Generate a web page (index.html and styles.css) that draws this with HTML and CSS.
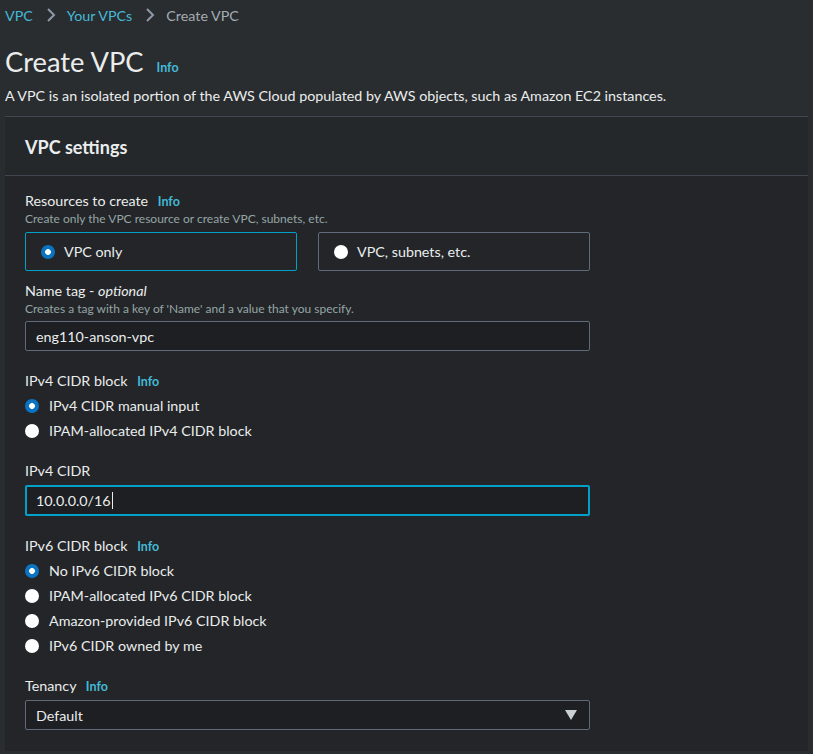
FILE: index.html
```html
<!DOCTYPE html>
<html lang="en">
<head>
<meta charset="utf-8">
<title>Create VPC</title>
<link rel="stylesheet" href="styles.css">
</head>
<body>
<nav class="crumbs">
  <a class="crumb-link" href="#">VPC</a>
  <svg class="chev" viewBox="0 0 10 16" width="10" height="16"><path d="M2 2l6 6-6 6" fill="none" stroke="#8d99a8" stroke-width="2"/></svg>
  <a class="crumb-link" href="#">Your VPCs</a>
  <svg class="chev" viewBox="0 0 10 16" width="10" height="16"><path d="M2 2l6 6-6 6" fill="none" stroke="#8d99a8" stroke-width="2"/></svg>
  <span class="crumb-current">Create VPC</span>
</nav>

<header class="page-head">
  <h1 class="title">Create VPC <a class="info info-title" href="#">Info</a></h1>
  <p class="lead">A VPC is an isolated portion of the AWS Cloud populated by AWS objects, such as Amazon EC2 instances.</p>
</header>

<section class="panel">
  <div class="panel-head"><h2>VPC settings</h2></div>
  <div class="panel-body">

    <div class="field">
      <div class="label">Resources to create <a class="info" href="#">Info</a></div>
      <div class="desc">Create only the VPC resource or create VPC, subnets, etc.</div>
      <div class="tiles">
        <div class="tile tile-on"><span class="radio radio-on"></span>VPC only</div>
        <div class="tile"><span class="radio"></span>VPC, subnets, etc.</div>
      </div>
    </div>

    <div class="field field-name">
      <div class="label">Name tag - <em>optional</em></div>
      <div class="desc">Creates a tag with a key of 'Name' and a value that you specify.</div>
      <div class="input">eng110-anson-vpc</div>
    </div>

    <div class="field field-gap">
      <div class="label">IPv4 CIDR block <a class="info" href="#">Info</a></div>
      <div class="radios">
        <div class="rrow"><span class="radio radio-on"></span>IPv4 CIDR manual input</div>
        <div class="rrow"><span class="radio"></span>IPAM-allocated IPv4 CIDR block</div>
      </div>
    </div>

    <div class="field field-after-radios">
      <div class="label">IPv4 CIDR</div>
      <div class="input input-focus">10.0.0.0/16<span class="caret"></span></div>
    </div>

    <div class="field field-gap">
      <div class="label">IPv6 CIDR block <a class="info" href="#">Info</a></div>
      <div class="radios">
        <div class="rrow"><span class="radio radio-on"></span>No IPv6 CIDR block</div>
        <div class="rrow"><span class="radio"></span>IPAM-allocated IPv6 CIDR block</div>
        <div class="rrow"><span class="radio"></span>Amazon-provided IPv6 CIDR block</div>
        <div class="rrow"><span class="radio"></span>IPv6 CIDR owned by me</div>
      </div>
    </div>

    <div class="field field-after-radios">
      <div class="label">Tenancy <a class="info" href="#">Info</a></div>
      <div class="input select">Default
        <svg class="caret-down" viewBox="0 0 12 10" width="12" height="10"><path d="M0 0h12L6 10z" fill="#c9cfd3"/></svg>
      </div>
    </div>

  </div>
</section>
</body>
</html>
```

FILE: styles.css
```css
* { box-sizing: border-box; }

html, body {
  margin: 0;
  background: #2a2d30;
}

body {
  padding: 0 5px;
  font-family: "Lato", "Open Sans", sans-serif;
  font-size: 14.3px;
  color: #e4e8e8;
}

a { text-decoration: none; }

.crumbs {
  height: 30px;
  display: flex;
  align-items: center;
  font-size: 14.3px;
}

.crumb-link { color: #44b9d6; }
.crumb-current { color: #a3acb3; }

.chev {
  margin: 0 11px 0 13px;
}

.page-head { margin-top: 14px; }

.title {
  margin: 0;
  height: 36px;
  font-size: 27.3px;
  line-height: 36px;
  font-weight: 400;
  color: #eaeded;
  white-space: nowrap;
}

.info {
  color: #44b9d6;
  font-weight: 700;
  font-size: 12.5px;
  line-height: 0;
  margin-left: 6px;
}

.info-title { margin-left: 6px; }

.lead {
  margin: 6px 0 0;
  height: 20px;
  line-height: 20px;
  color: #eaeded;
}

.panel {
  margin-top: 10px;
  background: #232528;
  border-top: 1px solid #414750;
  height: 635px;
}

.panel-head {
  height: 59px;
  padding: 18px 20px 0;
  border-bottom: 1px solid #414750;
  background: #25282b;
}

.panel-head h2 {
  margin: 0;
  font-size: 18px;
  line-height: 24px;
  font-weight: 700;
  color: #eaeded;
}

.panel-body {
  padding: 15px 20px 20px;
  width: 605px;
}

.label {
  height: 20px;
  line-height: 20px;
  color: #eaeded;
}

.label em { font-style: italic; }

.desc {
  height: 16px;
  font-size: 12px;
  line-height: 16px;
  color: #95a5a6;
}

.tiles {
  margin-top: 5px;
  display: flex;
  gap: 21px;
}

.tile {
  flex: 1;
  height: 39px;
  border: 1px solid #5f6b7a;
  border-radius: 2px;
  display: flex;
  align-items: center;
  padding-left: 15px;
  color: #eaeded;
}

.tile-on { border-color: #00a1c9; }

.radio {
  width: 14px;
  height: 14px;
  border-radius: 50%;
  background: #ffffff;
  flex: none;
  margin-right: 9px;
}

.radio-on {
  background: radial-gradient(circle, #ffffff 0 2.6px, #0a73c2 3.2px);
}

.field-name { margin-top: 10px; }

.input {
  margin-top: 4px;
  height: 30px;
  border: 1px solid #5f6b7a;
  border-radius: 2px;
  background: #1d1f22;
  display: flex;
  align-items: center;
  padding-left: 10px;
  color: #eaeded;
}

.input-focus {
  border: 2px solid #00a1c9;
  padding-left: 9px;
  height: 31px;
}

.caret {
  width: 1px;
  height: 17px;
  background: #eaeded;
  margin-left: 1px;
}

.field-gap { margin-top: 20px; }
.field-after-radios { margin-top: 18px; }

.radios { margin-top: 2px; }

.rrow {
  height: 25px;
  display: flex;
  align-items: center;
  color: #eaeded;
}

.rrow .radio { margin-right: 10px; }

.select {
  justify-content: space-between;
  padding-right: 12px;
}
```
